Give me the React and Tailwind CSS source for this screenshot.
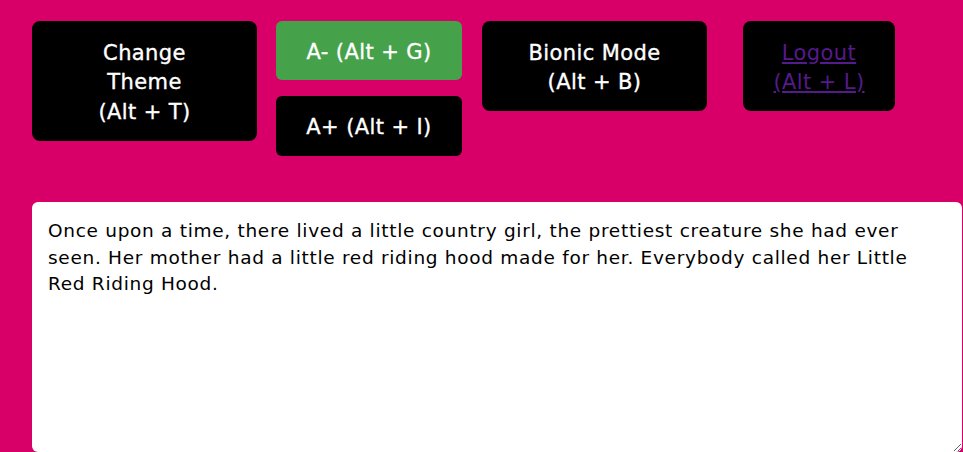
import React from "react";

export default function App() {
  const font = { fontFamily: '"DejaVu Sans", "Noto Sans", sans-serif' };
  return (
    <div className="w-[963px] h-[452px] bg-[#d80068] overflow-hidden" style={font}>
      <div className="flex items-start pt-[21px] pl-[32px] text-[21px] tracking-[0.4px] [-webkit-text-stroke:0.35px_currentColor]">
        <button className="w-[225px] h-[120px] pt-[4px] rounded-[8px] bg-black text-white leading-[29.5px] flex items-center justify-center text-center">
          <span>Change<br />Theme<br />(Alt + T)</span>
        </button>
        <div className="ml-[19px] flex flex-col gap-[16px]">
          <button className="w-[186px] h-[59px] pt-[4px] rounded-[6px] bg-[#45a24b] text-white flex items-center justify-center">
            A- (Alt + G)
          </button>
          <button className="w-[186px] h-[60px] pt-[4px] rounded-[6px] bg-black text-white flex items-center justify-center">
            A+ (Alt + I)
          </button>
        </div>
        <button className="ml-[20px] w-[225px] h-[90px] pt-[4px] rounded-[8px] bg-black text-white leading-[29.5px] flex items-center justify-center text-center">
          <span>Bionic Mode<br />(Alt + B)</span>
        </button>
        <div className="ml-[36px] w-[152px] h-[90px] pt-[4px] rounded-[8px] bg-black flex items-center justify-center text-center">
          <a href="#" className="text-[#551a8b] underline leading-[29.5px] [-webkit-text-stroke:0px]">
            Logout<br />(Alt + L)
          </a>
        </div>
      </div>
      <textarea
        className="block mt-[46px] ml-[32px] w-[930px] h-[250px] bg-white rounded-[6px] pl-[16px] pr-[30px] pt-[16px] pb-[12px] text-[18.5px] tracking-[0.7px] leading-[26.5px] text-black outline-none"
        style={font}
        defaultValue="Once upon a time, there lived a little country girl, the prettiest creature she had ever seen. Her mother had a little red riding hood made for her. Everybody called her Little Red Riding Hood."
      />
    </div>
  );
}
